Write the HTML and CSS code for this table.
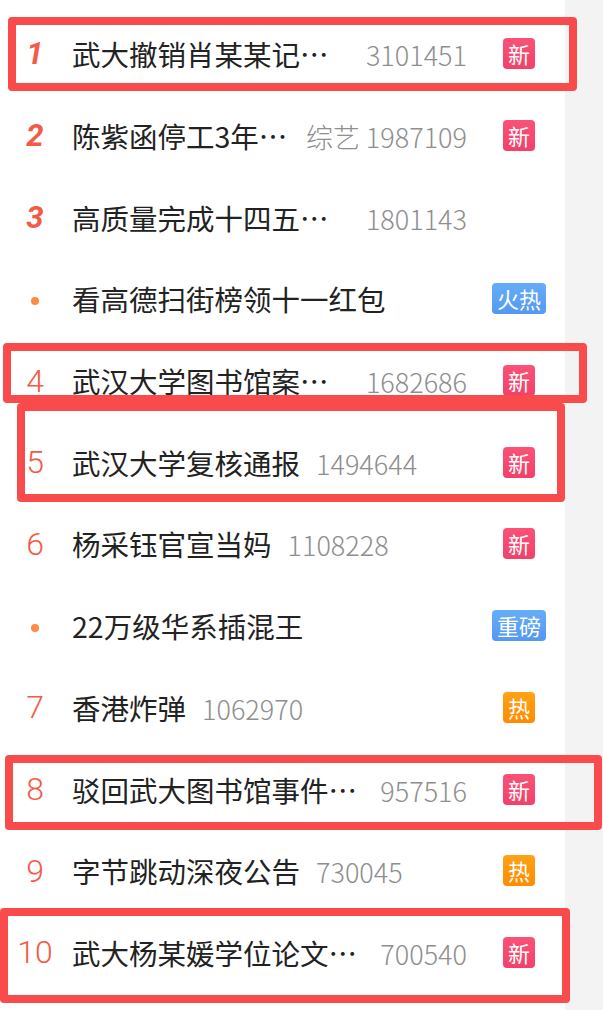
FILE: index.html
```html
<!DOCTYPE html>
<html lang="zh-CN">
<head>
<meta charset="utf-8">
<title>热搜榜</title>
<link rel="stylesheet" href="styles.css">
</head>
<body>
<ul class="list">
  <li class="row"><span class="rank top">1</span><div class="main"><span class="title">武大撤销肖某某记过处分</span><span class="count">3101451</span></div><span class="tag"><span class="badge new">新</span></span></li>
  <li class="row"><span class="rank top">2</span><div class="main"><span class="title">陈紫函停工3年后复出</span><span class="count">综艺 1987109</span></div><span class="tag"><span class="badge new">新</span></span></li>
  <li class="row"><span class="rank top">3</span><div class="main"><span class="title">高质量完成十四五规划目标任务</span><span class="count">1801143</span></div><span class="tag"></span></li>
  <li class="row"><span class="rank"><i class="dot"></i></span><div class="main"><span class="title">看高德扫街榜领十一红包</span></div><span class="tag"><span class="badge blue">火热</span></span></li>
  <li class="row"><span class="rank">4</span><div class="main"><span class="title">武汉大学图书馆案二审宣判</span><span class="count">1682686</span></div><span class="tag"><span class="badge new">新</span></span></li>
  <li class="row"><span class="rank">5</span><div class="main"><span class="title">武汉大学复核通报</span><span class="count">1494644</span></div><span class="tag"><span class="badge new">新</span></span></li>
  <li class="row"><span class="rank">6</span><div class="main"><span class="title">杨采钰官宣当妈</span><span class="count">1108228</span></div><span class="tag"><span class="badge new">新</span></span></li>
  <li class="row"><span class="rank"><i class="dot"></i></span><div class="main"><span class="title">22万级华系插混王</span></div><span class="tag"><span class="badge blue">重磅</span></span></li>
  <li class="row"><span class="rank">7</span><div class="main"><span class="title">香港炸弹</span><span class="count">1062970</span></div><span class="tag"><span class="badge hot">热</span></span></li>
  <li class="row"><span class="rank">8</span><div class="main"><span class="title">驳回武大图书馆事件上诉</span><span class="count">957516</span></div><span class="tag"><span class="badge new">新</span></span></li>
  <li class="row"><span class="rank">9</span><div class="main"><span class="title">字节跳动深夜公告</span><span class="count">730045</span></div><span class="tag"><span class="badge hot">热</span></span></li>
  <li class="row"><span class="rank">10</span><div class="main"><span class="title">武大杨某媛学位论文被撤销</span><span class="count">700540</span></div><span class="tag"><span class="badge new">新</span></span></li>
</ul>
<div class="mark m1"></div>
<div class="mark m2"></div>
<div class="mark m3"></div>
<div class="mark m4"></div>
<div class="mark m5"></div>
</body>
</html>
```

FILE: styles.css
```css
* {
  box-sizing: border-box;
  margin: 0;
  padding: 0;
}

html, body {
  width: 603px;
  height: 1010px;
  overflow: hidden;
}

body {
  position: relative;
  background: #f3f3f4;
  font-family: "Noto Sans CJK SC", "Noto Sans", sans-serif;
}

.list {
  list-style: none;
  width: 565px;
  height: 1010px;
  background: #ffffff;
  padding-top: 13px;
}

.row {
  display: grid;
  grid-template-columns: 70px 1fr 92px;
  align-items: center;
  height: 81.7px;
}

.rank {
  text-align: center;
  font-family: "Roboto", "Liberation Sans", sans-serif;
  font-size: 32px;
  font-weight: 300;
  line-height: 1;
  color: #f45a48;
}

.rank.top {
  font-weight: 700;
  font-style: italic;
  font-size: 31px;
}

.dot {
  display: inline-block;
  width: 8px;
  height: 8px;
  border-radius: 50%;
  background: #ff8a45;
  vertical-align: middle;
}

.main {
  display: flex;
  align-items: baseline;
  min-width: 0;
  padding-left: 2px;
  padding-right: 6px;
}

.title {
  flex: 0 1 auto;
  min-width: 0;
  font-size: 28.5px;
  color: #222222;
  white-space: nowrap;
  overflow: hidden;
  text-overflow: ellipsis;
}

.count {
  flex: none;
  margin-left: 16px;
  font-size: 27px;
  font-weight: 300;
  color: #8e8e8e;
  white-space: nowrap;
}

.tag {
  justify-self: center;
  display: flex;
}

.badge {
  height: 31px;
  padding: 0 4.5px;
  border-radius: 4px;
  font-size: 22px;
  line-height: 31px;
  color: #ffffff;
}

.badge.new {
  background: linear-gradient(180deg, #fb5277 0%, #f2406a 100%);
}

.badge.blue {
  background: linear-gradient(180deg, #66adf8 0%, #5398f3 100%);
}

.badge.hot {
  background: linear-gradient(180deg, #ffa316 0%, #ff8a00 100%);
}

.mark {
  position: absolute;
  border: 8px solid #f94b4b;
  border-radius: 4px;
}

.m1 { left: 8px;  top: 17px;  width: 569px; height: 74px; }
.m2 { left: 3px;  top: 343px; width: 584px; height: 60px; }
.m3 { left: 17px; top: 403px; width: 548px; height: 99px; }
.m4 { left: 5px;  top: 755px; width: 597px; height: 75px; }
.m5 { left: 0px;  top: 908px; width: 570px; height: 95px; }
```
